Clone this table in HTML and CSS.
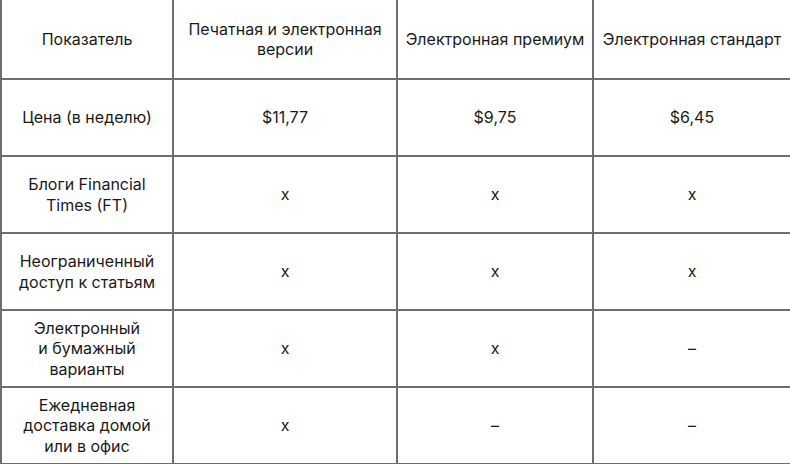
FILE: index.html
```html
<!DOCTYPE html>
<html lang="ru">
<head>
<meta charset="utf-8">
<link rel="stylesheet" href="styles.css">
</head>
<body>
<table class="cmp">
  <colgroup>
    <col class="c1"><col class="c2"><col class="c3"><col class="c4">
  </colgroup>
  <tr class="head">
    <td>Показатель</td>
    <td>Печатная и электронная<br>версии</td>
    <td>Электронная премиум</td>
    <td>Электронная стандарт</td>
  </tr>
  <tr>
    <td>Цена (в неделю)</td>
    <td>$11,77</td>
    <td>$9,75</td>
    <td>$6,45</td>
  </tr>
  <tr>
    <td>Блоги Financial<br>Times (FT)</td>
    <td>x</td>
    <td>x</td>
    <td>x</td>
  </tr>
  <tr>
    <td>Неограниченный<br>доступ к статьям</td>
    <td>x</td>
    <td>x</td>
    <td>x</td>
  </tr>
  <tr>
    <td>Электронный<br>и бумажный<br>варианты</td>
    <td>x</td>
    <td>x</td>
    <td>–</td>
  </tr>
  <tr>
    <td>Ежедневная<br>доставка домой<br>или в офис</td>
    <td>x</td>
    <td>–</td>
    <td>–</td>
  </tr>
</table>
</body>
</html>
```
FILE: styles.css
```css
html, body {
  margin: 0;
  padding: 0;
  background: #ffffff;
}
.cmp {
  width: 790px;
  table-layout: fixed;
  border-collapse: collapse;
  font-family: Inter, "Noto Sans", sans-serif;
  font-size: 16px;
  line-height: 20.5px;
  color: #1a1a1a;
}
.c1 { width: 172px; }
.c2 { width: 224px; }
.c3 { width: 196px; }
.c4 { width: 198px; }
.cmp td {
  border: 2px solid #6e6e6e;
  height: 75px;
  padding: 0 2px;
  text-align: center;
  vertical-align: middle;
}
.cmp .head td {
  border-top: none;
  height: 78px;
}
```
